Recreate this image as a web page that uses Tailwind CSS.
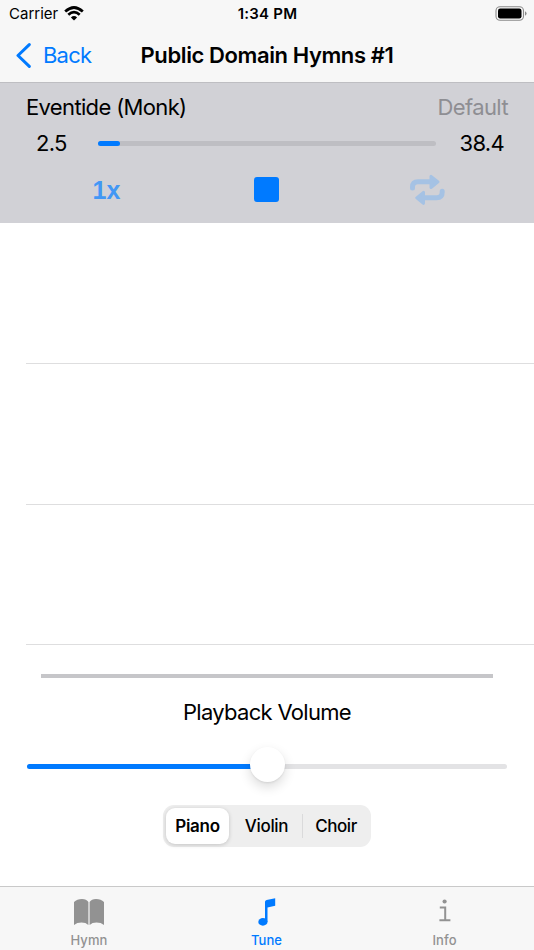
<!DOCTYPE html>
<html lang="en">
<head>
  <meta charset="UTF-8">
  <meta name="viewport" content="width=device-width, initial-scale=1.0">
  <title>Public Domain Hymns #1</title>
  <script src="https://cdn.jsdelivr.net/npm/@tailwindcss/browser@4"></script>
</head>
<body class="bg-white text-black font-[Inter,sans-serif]">
  <div class="flex flex-col h-[950px] w-[534px] overflow-hidden">

    <header class="h-[83px] shrink-0 bg-[#f7f7f7] border-b border-[#bebec2]">
      <!-- Status bar -->
      <div class="h-7 grid grid-cols-3 items-center pl-[9px] pr-[7px]">
        <div class="flex items-center gap-[6px]">
          <span class="text-[15px] leading-7">Carrier</span>
          <svg class="w-5 h-[15px] -mt-[2px]" viewBox="0 0 20 15" fill="none" stroke="#000" stroke-width="2.7">
            <path d="M1.2 5.6Q10-2.6 18.8 5.6"/>
            <path d="M4.3 8.8Q10 3.6 15.7 8.8"/>
            <path d="M10 14.6L6.9 11.4Q10 8.8 13.1 11.4Z" fill="#000" stroke="none"/>
          </svg>
        </div>
        <span class="text-center text-[15px] leading-7 font-semibold tracking-[0.25px] -ml-px">1:34 PM</span>
        <svg class="w-8 h-[15px] justify-self-end -mt-px" viewBox="0 0 32 15">
          <rect x="1" y=".7" width="27.5" height="13.6" rx="4" fill="none" stroke="#8b8b8b" stroke-width="1.1"/>
          <rect x="3" y="2.6" width="23.5" height="9.8" rx="2.2"/>
          <path d="M30 5.2Q31.6 6 31.6 7.5T30 9.8Z" fill="#8b8b8b"/>
        </svg>
      </div>

      <!-- Navigation bar -->
      <div class="h-[54px] grid grid-cols-[140px_1fr_140px] items-center">
        <a href="#" class="flex items-center pl-[16px] gap-3 text-[#007aff]">
          <svg class="w-[15px] h-[25px]" viewBox="0 0 15 25" fill="none" stroke="currentColor" stroke-width="3" stroke-linecap="round" stroke-linejoin="round"><path d="M13.3 1.6L2 12.5L13.3 23.4"/></svg>
          <span class="text-[22px] leading-[54px] tracking-[-0.8px]">Back</span>
        </a>
        <h1 class="text-center whitespace-nowrap text-[22px] leading-[54px] font-semibold tracking-[-0.4px]">Public Domain Hymns #1</h1>
      </div>
    </header>

    <!-- Player -->
    <section class="h-[140px] shrink-0 bg-[#d1d1d6]">
      <div class="flex justify-between h-12 pl-[26px] pr-[26px] text-[22px] leading-[48px] tracking-[-0.65px]">
        <span>Eventide (Monk)</span>
        <span class="text-[#8e8e93] tracking-[-0.6px]">Default</span>
      </div>
      <div class="flex items-center h-6 pl-[36px] pr-[30px] text-[22px] leading-[26px] tracking-[-0.7px]">
        <span class="w-[62px]">2.5</span>
        <div class="w-[338px] h-[5px] rounded-full bg-[#bebec3]">
          <div class="w-[22px] h-[5px] rounded-full bg-[#007aff]"></div>
        </div>
        <span class="ml-auto">38.4</span>
      </div>
      <div class="grid grid-cols-[213px_107px_214px] h-[68px] items-center justify-items-center">
        <span class="pt-[3px] text-[25px] leading-none font-bold text-[#4297f5] font-['Liberation_Sans',sans-serif]">1x</span>
        <div class="w-[25px] h-[25px] rounded-[3px] bg-[#007aff]"></div>
        <svg class="w-[35px] h-[31px]" viewBox="0 0 35 31" fill="#a5c2e4">
          <path d="M2.5 14V13Q2.5 7.7 8 7.7H20" fill="none" stroke="#a5c2e4" stroke-width="5" stroke-linecap="round"/>
          <path d="M21 2.3L28 7.9L21 13.5Z" stroke="#a5c2e4" stroke-width="3" stroke-linejoin="round"/>
          <path d="M32.2 17.3V18.3Q32.2 23.7 26.7 23.7H14" fill="none" stroke="#a5c2e4" stroke-width="5" stroke-linecap="round"/>
          <path d="M13.5 18.3L6.8 23.8L13.5 29.3Z" stroke="#a5c2e4" stroke-width="3" stroke-linejoin="round"/>
        </svg>
      </div>
    </section>

    <!-- Empty rows -->
    <div class="pl-[26px] shrink-0">
      <div class="h-[141px] border-b border-[#dededf]"></div>
      <div class="h-[141px] border-b border-[#dededf]"></div>
      <div class="h-[140px] border-b border-[#dededf]"></div>
    </div>

    <!-- Volume and instrument -->
    <main class="flex-1 flex flex-col items-center pt-[29px]">
      <div class="w-[452px] h-[4px] bg-[#c6c6c9]"></div>
      <h2 class="mt-[17px] text-[22px] leading-[34px] tracking-[-0.7px]">Playback Volume</h2>
      <div class="relative mt-[35px] w-[480px] h-[5px] rounded-full bg-[#e3e3e5]">
        <div class="w-1/2 h-[5px] rounded-full bg-[#007aff]"></div>
        <div class="absolute left-[223px] top-[-17px] w-[35px] h-[35px] rounded-full bg-white shadow-[0_5px_12px_rgba(0,0,0,0.14),0_1px_2px_rgba(0,0,0,0.08)]"></div>
      </div>
      <div class="mt-[36px] w-[208px] h-[42px] rounded-[11px] bg-[#eeeeee] flex items-center p-[3px] text-[17px] tracking-[-0.3px]">
        <div class="w-[63px] h-9 rounded-[9px] bg-white shadow-[0_1px_4px_rgba(0,0,0,0.18)] text-center leading-9 font-semibold">Piano</div>
        <div class="w-[73px] text-center leading-9 font-medium pl-[2px]">Violin</div>
        <div class="w-px h-6 bg-[#dadadb]"></div>
        <div class="flex-1 text-center leading-9 font-medium pl-px tracking-[-0.45px]">Choir</div>
      </div>
    </main>

    <!-- Tab bar -->
    <nav class="h-[64px] shrink-0 grid grid-cols-3 bg-[#f7f7f7] border-t border-[#c9c9c9] text-[13px] font-medium text-[#929292] text-center">
      <a href="#" class="flex flex-col items-center">
        <svg class="w-[30px] h-[28px] mt-[11px]" viewBox="0 0 30 28" fill="#929292">
          <path d="M0 4Q3 1 8 1Q12.5 1 14.4 4V27Q11.8 24.6 7.5 24.6Q3 24.6 0 27Z"/>
          <path d="M15.6 4Q17.5 1 22 1Q27 1 30 4V27Q27 24.6 22.5 24.6Q18.2 24.6 15.6 27Z"/>
        </svg>
        <span class="mt-[6px] leading-4 tracking-[0.1px]">Hymn</span>
      </a>
      <a href="#" class="flex flex-col items-center text-[#007aff]">
        <svg class="w-[18px] h-[28px] mt-[11px]" viewBox="0 0 18 28" fill="#007aff">
          <ellipse cx="4.9" cy="23.9" rx="4.6" ry="3.8"/>
          <path d="M7 24V3.8Q7 2.2 8.6 1.9L17.2 .2V7.8L9.5 9.4V24Z"/>
        </svg>
        <span class="mt-[6px] leading-4 tracking-[0.1px] -ml-px">Tune</span>
      </a>
      <a href="#" class="flex flex-col items-center">
        <svg class="w-[12px] h-[28px] mt-[11px]" viewBox="0 0 12 28" fill="none" stroke="#929292" stroke-width="2">
          <circle cx="5.6" cy="3.5" r="2.1" fill="#929292" stroke="none"/>
          <path d="M.8 9.5H6.2V22.2M.4 22.2H11.4"/>
        </svg>
        <span class="mt-[6px] leading-4 tracking-[0.1px] -ml-px">Info</span>
      </a>
    </nav>
  </div>
</body>
</html>
